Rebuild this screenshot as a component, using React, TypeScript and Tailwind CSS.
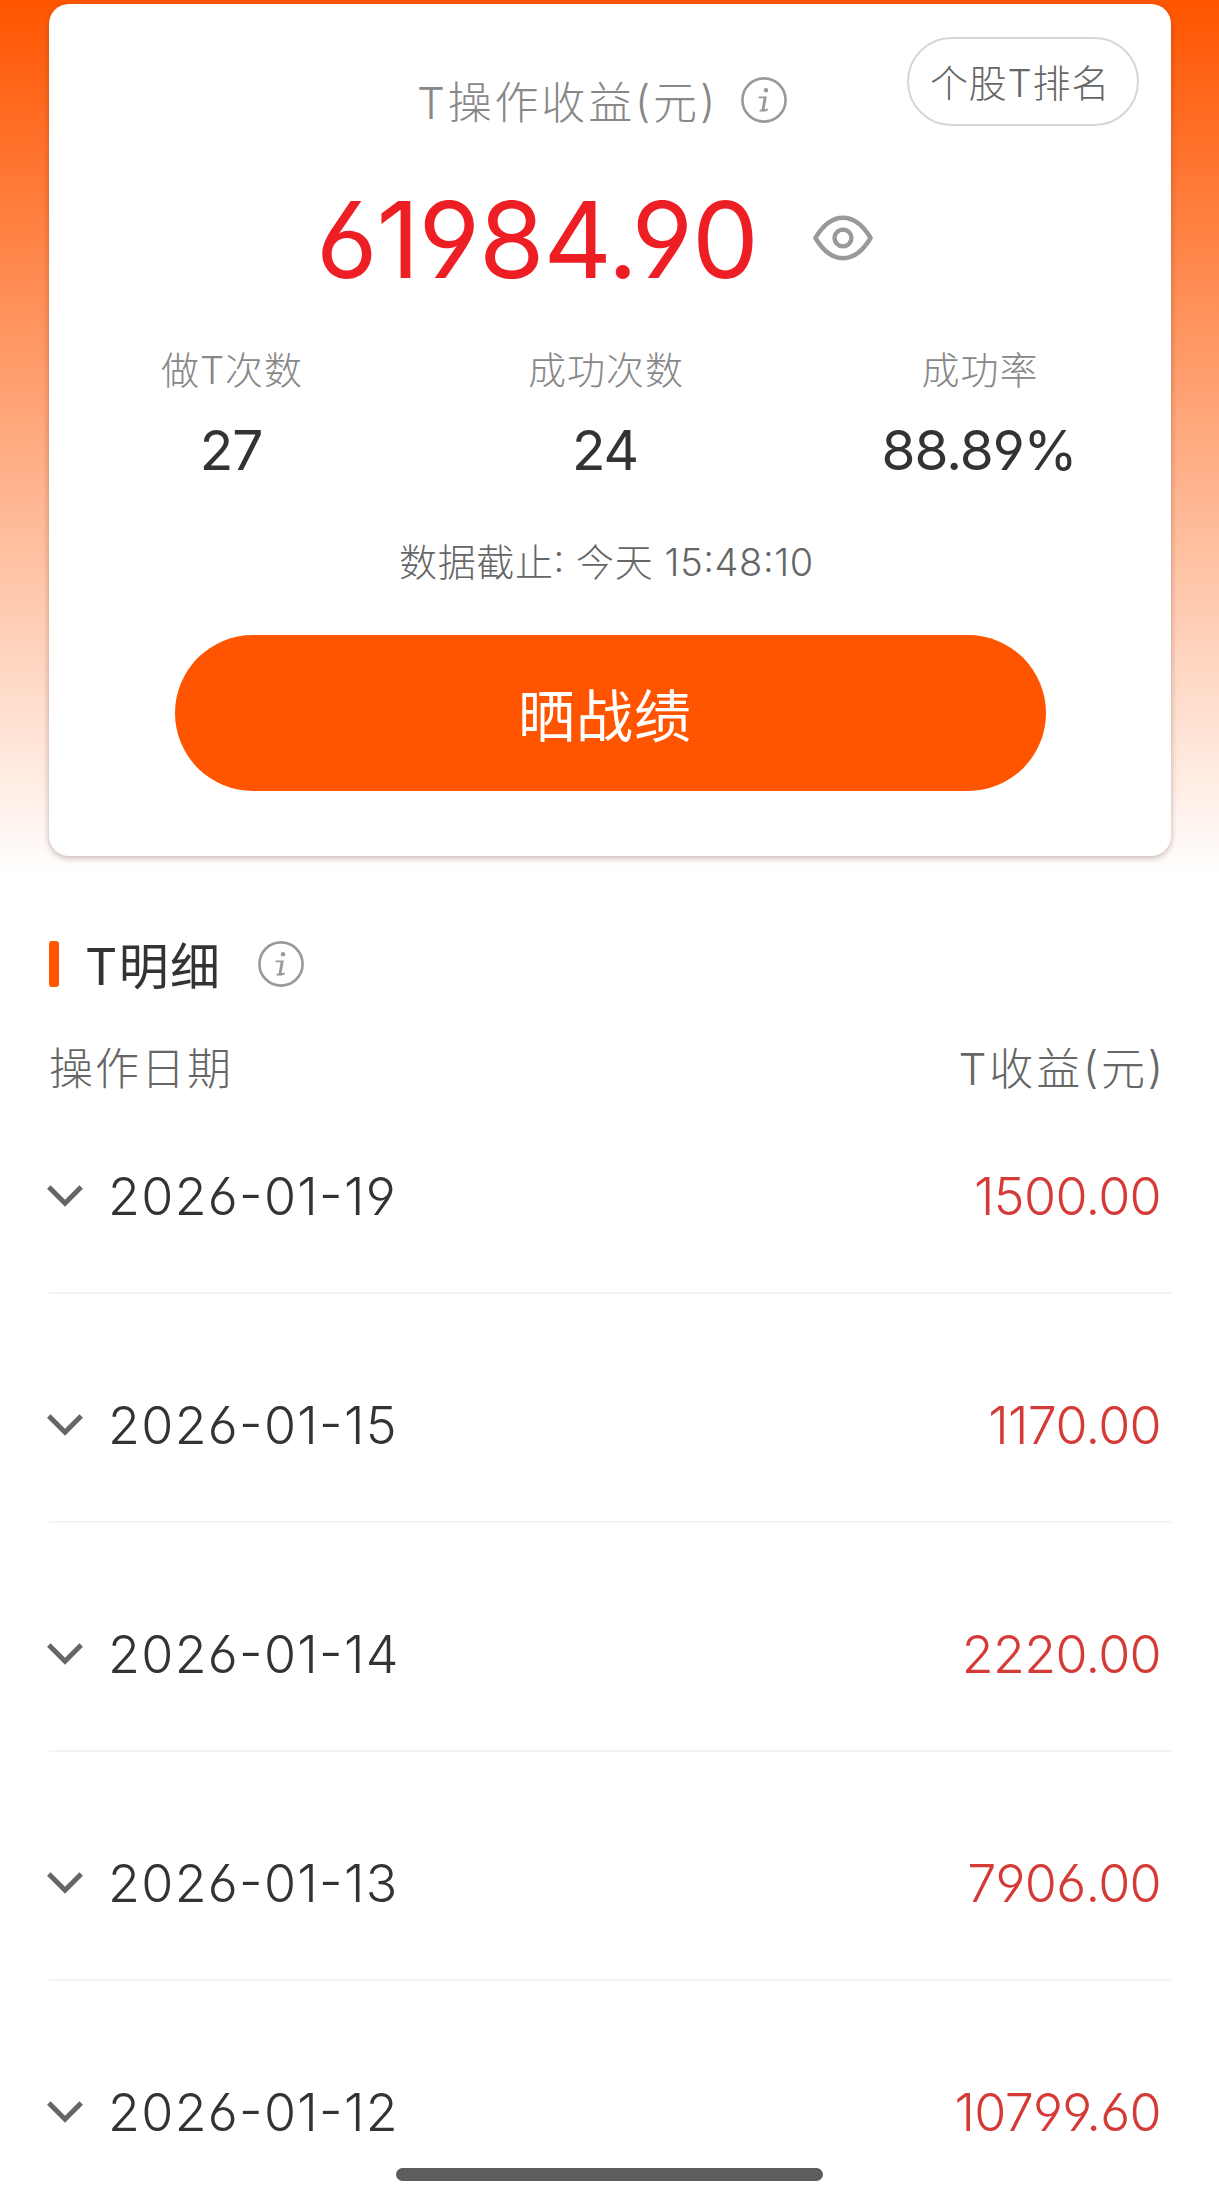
type RecordItem = {
  date: string;
  amount: string;
};

const stats = [
  { label: "做T次数", value: "27" },
  { label: "成功次数", value: "24" },
  { label: "成功率", value: "88.89%" },
];

const records: RecordItem[] = [
  { date: "2026-01-19", amount: "1500.00" },
  { date: "2026-01-15", amount: "1170.00" },
  { date: "2026-01-14", amount: "2220.00" },
  { date: "2026-01-13", amount: "7906.00" },
  { date: "2026-01-12", amount: "10799.60" },
];

const InfoIcon = () => (
  <svg
    className="w-[46px] h-[46px] shrink-0"
    viewBox="0 0 46 46"
    fill="none"
  >
    <circle cx="23" cy="23" r="21.6" stroke="#999" strokeWidth="2.6" />
    <circle cx="25" cy="13.2" r="2.2" fill="#999" />
    <path d="M17.6 19.6H25.8L23.2 34.4H18.4L18.8 32.8L20.6 32.4L22.6 21.2H17.6Z" fill="#999" />
    <path d="M22.4 34.4L22.8 32.4L26.8 31.6V33.2Q25 34.4 22.4 34.4Z" fill="#999" />
  </svg>
);

const EyeIcon = () => (
  <svg className="-mt-[2px] w-[60px] h-[46px]" viewBox="0 0 60 46" fill="none">
    <path
      d="M2.4 23C9 12 18 2.8 30 2.8S51 12 57.6 23C51 34 42 43.2 30 43.2S9 34 2.4 23Z"
      stroke="#999"
      strokeWidth="4.4"
      strokeLinejoin="round"
    />
    <circle cx="30" cy="23" r="8.4" stroke="#999" strokeWidth="4.4" />
  </svg>
);

const ChevronIcon = () => (
  <svg className="-ml-0.5 w-9 h-[23px]" viewBox="0 0 36 23" fill="none">
    <path d="M1.8 2L18 18.2L34.2 2" stroke="#666" strokeWidth="5" />
  </svg>
);

const SummaryCard = () => (
  <section className="relative h-[852px] rounded-[20px] bg-white shadow-[0_2px_6px_rgba(90,50,40,0.35)]">
    <button className="absolute right-8 top-[33px] h-[89px] w-[232px] rounded-full border-2 border-[#d6d6d6] pt-[2px] pr-1.5 text-[38px] font-light leading-none tracking-[0.8px] text-[#666]">
      个股T排名
    </button>

    <div className="flex items-center pl-[368px] pt-[72px] h-[120px]">
      <h1 className="w-[324px] whitespace-nowrap pt-1.5 text-[44px] font-light leading-none tracking-[2.8px] text-[#888]">
        T操作收益(元)
      </h1>
      <InfoIcon />
    </div>

    <div className="flex h-[106px] items-center mt-[62px] pl-[267px]">
      <span className="w-[497px] pt-[2px] text-[106px] leading-none tracking-[-1.1px] text-[#ee1f24]">
        61984.90
      </span>
      <EyeIcon />
    </div>

    <div className="-ml-[4px] mr-[4px] grid grid-cols-3 mt-[58px]">
      {stats.map((item) => (
        <div key={item.label} className="flex flex-col items-center">
          <span className="text-[38px] font-light leading-[40px] tracking-[1px] text-[#888]">
            {item.label}
          </span>
          <span className="mt-[30px] pr-[2px] text-[55px] leading-[60px] tracking-[-1.1px] text-[#333]">
            {item.value}
          </span>
        </div>
      ))}
    </div>

    <p className="mt-[62px] pr-[7px] text-center text-[38px] font-light leading-[40px] tracking-[0.6px] text-[#666]">
      数据截止: 今天 15:48:10
    </p>

    <button className="mx-auto mt-[53px] block h-[156px] w-[871px] rounded-full bg-[#ff5500] pr-[10px] pt-[7px] text-[57px] leading-none tracking-[1px] text-white">
      晒战绩
    </button>
  </section>
);

const RecordRow = ({ date, amount }: RecordItem) => (
  <li className="flex h-[229px] items-center border-b-2 border-[#f3f3f3] pr-[10px] pt-[36px] text-[52px] font-light leading-none">
    <ChevronIcon />
    <span className="ml-[25px] flex-1 pt-px tracking-[1.3px] text-[#333]">
      {date}
    </span>
    <span className="pt-px tracking-[-0.7px] text-[#d43a36]">{amount}</span>
  </li>
);

export default function App() {
  return (
    <main className="relative h-[2201px] w-[1219px] overflow-hidden bg-white font-['Inter','Noto_Sans_CJK_SC',sans-serif] [font-feature-settings:'cv03','cv04','case']">
      <div className="h-[904px] bg-linear-to-b/srgb from-[#ff5500] to-white to-[876px] pl-[49px] pr-12 pt-1">
        <SummaryCard />
      </div>

      <div className="pl-[49px] pr-12">
        <div className="flex h-[46px] mt-[37px] items-center">
          <span className="h-[46px] w-[10px] rounded-[3px] bg-[#ff5500]" />
          <h2 className="ml-[26px] w-[173px] whitespace-nowrap pt-1.5 text-[50px] leading-none tracking-[1.4px] text-[#333]">
            T明细
          </h2>
          <InfoIcon />
        </div>

        <div className="mt-[59px] flex h-[46px] items-center justify-between pr-[5px] text-[44px] font-light text-[#666]">
          <span className="tracking-[2px]">操作日期</span>
          <span className="tracking-[2.8px]">T收益(元)</span>
        </div>

        <ul className="-mt-[27px]">
          {records.map((item) => (
            <RecordRow key={item.date} {...item} />
          ))}
        </ul>
      </div>

      <div className="absolute bottom-5 left-[396px] h-[13px] w-[427px] rounded-full bg-[#5c5e5b]" />
    </main>
  );
}
